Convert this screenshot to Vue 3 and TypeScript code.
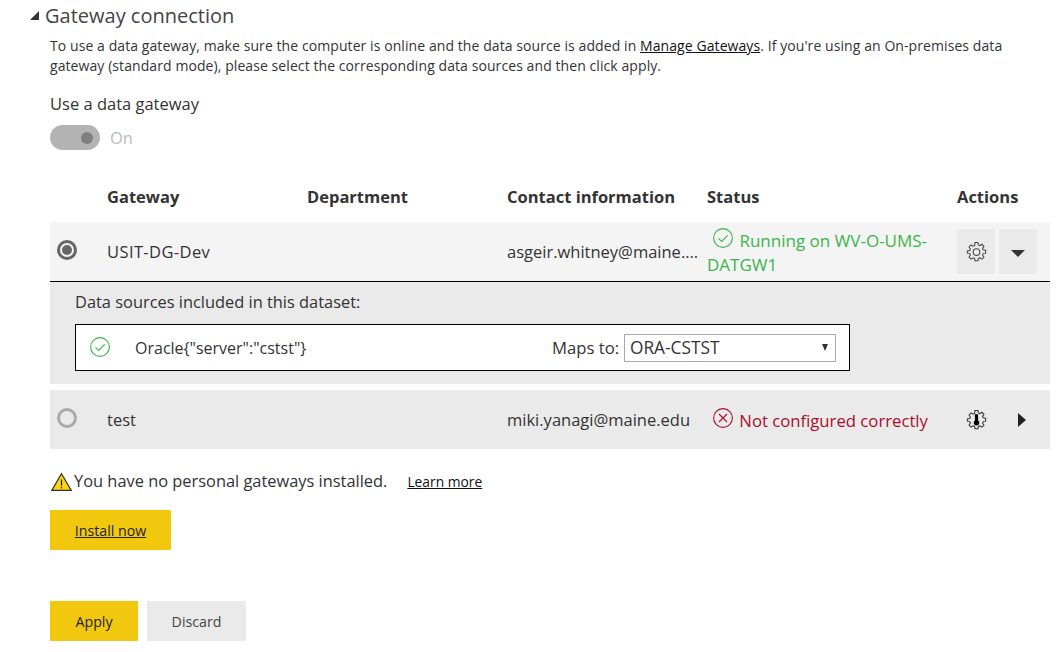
<script setup lang="ts">
const columns: string[] = ['Gateway', 'Department', 'Contact information', 'Status', 'Actions']
const gearPath =
  'M8.6 1.5h2.8l.4 2.3 1.4.6 1.9-1.3 2 2-1.3 1.9.6 1.4 2.3.4v2.8l-2.3.4-.6 1.4 1.3 1.9-2 2-1.9-1.3-1.4.6-.4 2.3H8.6l-.4-2.3-1.4-.6-1.9 1.3-2-2 1.3-1.9-.6-1.4-2.3-.4V9.4l2.3-.4.6-1.4-1.3-1.9 2-2 1.9 1.3 1.4-.6z'
</script>

<template>
  <main class="page">
    <h1 class="title"><span class="collapse"></span>Gateway connection</h1>
    <section class="content">
      <p class="intro">
        To use a data gateway, make sure the computer is online and the data source is added in
        <a class="link">Manage Gateways</a>. If you're using an On-premises data gateway (standard mode), please select the corresponding data sources and then click apply.
      </p>
      <div class="use-label">Use a data gateway</div>
      <div class="toggle-row">
        <span class="toggle"><span class="knob"></span></span>
        <span class="toggle-text">On</span>
      </div>

      <div class="grid head">
        <span></span>
        <span v-for="c in columns" :key="c">{{ c }}</span>
      </div>

      <div class="grid row row-open">
        <span class="radio radio-on"></span>
        <span class="cell caps">USIT-DG-Dev</span>
        <span class="cell"></span>
        <span class="cell mail">asgeir.whitney@maine.edu</span>
        <span class="status ok">
          <svg class="status-icon" viewBox="1 1 20 20" fill="none" stroke="currentColor"><circle cx="11" cy="11" r="9.4" stroke-width="1.1" /><path d="M6.5 11.3l3.2 3.2 6-6.2" stroke-width="1.1" /></svg>
          Running on WV-O-UMS-DATGW1
        </span>
        <span class="actions">
          <button class="icon-btn">
            <svg width="21" height="21" viewBox="0 0 20 20" fill="none" stroke="#444" stroke-width="1"><path :d="gearPath" /><circle cx="10" cy="10.5" r="3.2" /></svg>
          </button>
          <button class="icon-btn"><span class="arrow-down"></span></button>
        </span>
      </div>

      <div class="details">
        <div class="details-title">Data sources included in this dataset:</div>
        <div class="source">
          <svg class="source-icon" viewBox="1 1 20 20" fill="none" stroke="#3bb44a"><circle cx="11" cy="11" r="9.4" stroke-width="1.1" /><path d="M6.5 11.3l3.2 3.2 6-6.2" stroke-width="1.1" /></svg>
          <span class="source-name">Oracle{"server":"cstst"}</span>
          <span class="maps">Maps to:</span>
          <span class="select">ORA-CSTST<span class="select-arrow"></span></span>
        </div>
      </div>

      <div class="grid row row-closed">
        <span class="radio"></span>
        <span class="cell">test</span>
        <span class="cell"></span>
        <span class="cell mail">miki.yanagi@maine.edu</span>
        <span class="status bad">
          <svg class="status-icon" viewBox="1 1 20 20" fill="none" stroke="currentColor" stroke-width="1.1"><circle cx="11" cy="11" r="9.4" /><path d="M7 7l8 8M15 7l-8 8" /></svg>
          Not configured correctly
        </span>
        <span class="actions">
          <span class="plain-icon">
            <svg width="21" height="21" viewBox="0 0 20 20" fill="none" stroke="#333" stroke-width="1"><path :d="gearPath" /><path d="M10 5v7" stroke="#000" stroke-width="3" /><circle cx="10" cy="13" r="2.6" fill="#000" stroke="none" /></svg>
          </span>
          <span class="plain-icon"><span class="arrow-right"></span></span>
        </span>
      </div>

      <div class="warning">
        <svg class="warn-icon" viewBox="0 0 24 22"><path d="M12 1.5L23 20.5H1z" fill="#f7d417" stroke="#333" stroke-width="1.4" /><path d="M12 8v7M12 16.5v2" stroke="#222" stroke-width="1.4" /></svg>
        <span class="warn-text">You have no personal gateways installed.</span>
        <a class="link small">Learn more</a>
      </div>

      <button class="btn primary install"><span class="underline">Install now</span></button>

      <div class="footer">
        <button class="btn primary apply">Apply</button>
        <button class="btn discard">Discard</button>
      </div>
    </section>
  </main>
</template>

<style>
html, body { margin: 0; background: #fff; }
</style>

<style scoped>
.page {
  width: 1057px;
  height: 652px;
  overflow: hidden;
  box-sizing: border-box;
  font-family: "Open Sans", "Noto Sans", sans-serif;
  color: #333;
  padding-left: 30px;
}
.title {
  display: flex;
  align-items: center;
  margin: 0;
  padding-top: 2px;
  height: 27px;
  font-size: 20px;
  font-weight: 400;
  line-height: 27px;
  color: #444;
}
.collapse {
  width: 0;
  height: 0;
  margin-right: 6px;
  border-style: solid;
  border-width: 0 0 9px 9px;
  border-color: transparent transparent #333 transparent;
}
.content { padding: 0 7px 0 20px; }
.intro {
  margin: 7px 0 0;
  font-size: 14px;
  line-height: 20px;
  width: 965px;
  letter-spacing: 0.08px;
}
.link { color: #111; text-decoration: underline; }
.use-label { margin-top: 17px; font-size: 16.5px; line-height: 22px; }
.toggle-row { display: flex; align-items: center; gap: 10px; margin-top: 10px; height: 25px; }
.toggle {
  display: flex;
  align-items: center;
  justify-content: flex-end;
  box-sizing: border-box;
  width: 50px;
  height: 25px;
  padding-right: 7px;
  border-radius: 13px;
  background: #b3b3b3;
}
.knob { width: 12px; height: 12px; border-radius: 50%; background: #7f7f7f; }
.toggle-text { font-size: 16.5px; color: #bbb; }
.grid {
  display: grid;
  grid-template-columns: 57px 200px 200px 200px 250px 93px;
  align-items: center;
}
.head { margin-top: 34px; height: 25px; font-size: 16.5px; font-weight: 700; color: #333; }
.row { font-size: 16.5px; height: 59px; }
.row-open { margin-top: 13px; background: #f4f4f4; border-bottom: 1px solid #000; height: 60px; box-sizing: border-box; }
.row-closed { margin-top: 6px; background: #eaeaea; }
.caps { letter-spacing: 0.4px; }
.radio {
  box-sizing: border-box;
  width: 20px;
  height: 20px;
  margin: -3px 0 0 7px;
  border-radius: 50%;
  border: 3px solid #aaa;
}
.radio-on { border-color: #666; position: relative; }
.radio-on::after {
  content: "";
  position: absolute;
  inset: 2px;
  border-radius: 50%;
  background: #666;
}
.mail { white-space: nowrap; overflow: hidden; text-overflow: ellipsis; padding-right: 8px; }
.status { line-height: 24px; font-size: 17px; width: 240px; }
.status-icon { width: 20px; height: 20px; vertical-align: -1px; margin: 0 2px 0 6px; }
.ok { color: #3bb44a; margin-top: 1px; }
.bad { color: #a80f2a; font-size: 16.7px; margin-top: 1px; white-space: nowrap; }
.actions { display: flex; gap: 4px; height: 45px; }
.icon-btn, .plain-icon {
  display: flex;
  align-items: center;
  justify-content: center;
  width: 38px;
  height: 45px;
  padding: 0;
  border: 0;
  background: #eaeaea;
}
.plain-icon { background: transparent; }
.arrow-down { width: 0; height: 0; border-style: solid; border-width: 7px 7px 0; border-color: #333 transparent transparent; margin-top: 3px; }
.arrow-right { width: 0; height: 0; margin-left: 8px; border-style: solid; border-width: 7px 0 7px 8px; border-color: transparent transparent transparent #222; }
.details {
  box-sizing: border-box;
  height: 102px;
  padding: 10px 0 0 25px;
  background: #eaeaea;
}
.details-title { font-size: 16.4px; line-height: 20px; }
.source {
  display: flex;
  align-items: center;
  box-sizing: border-box;
  width: 775px;
  height: 47px;
  margin-top: 12px;
  padding-left: 14px;
  background: #fff;
  border: 1px solid #000;
  font-size: 16px;
}
.source-icon { width: 20px; height: 20px; margin-top: -1px; }
.source-name { margin-left: 25px; width: 417px; }
.maps { margin-right: 4px; width: 68px; font-size: 16.7px; white-space: nowrap; }
.select {
  display: flex;
  align-items: center;
  box-sizing: border-box;
  position: relative;
  width: 212px;
  height: 28px;
  padding-left: 5px;
  border: 1px solid #aaa;
  font-size: 17.3px;
}
.select-arrow {
  position: absolute;
  right: 7px;
  top: 9px;
  border-style: solid;
  border-width: 7px 3.5px 0;
  border-color: #333 transparent transparent;
}
.warning { display: flex; align-items: center; margin-top: 19px; height: 24px; }
.warn-icon { width: 21px; height: 20px; margin: 3px 2px 0 1px; }
.warn-text { font-size: 16.4px; }
.small { margin-left: 20px; margin-top: 2px; font-size: 13.8px; }
.btn {
  display: block;
  height: 40px;
  padding: 0;
  border: 0;
  font-family: inherit;
  font-size: 14.2px;
  color: #222;
}
.primary { background: #f2c80f; }
.install { width: 121px; margin-top: 18px; }
.underline { text-decoration: underline; }
.footer { display: flex; gap: 9px; margin-top: 51px; }
.apply { width: 88px; }
.discard { width: 99px; background: #eaeaea; color: #444; }
</style>
